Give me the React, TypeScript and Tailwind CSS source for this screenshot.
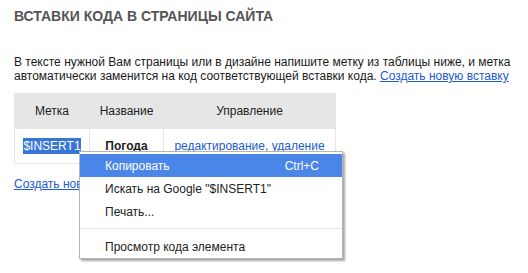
import React from "react";

export default function App() {
  return (
    <div className="w-[528px] h-[273px] bg-white relative overflow-hidden" style={{ fontFamily: '"Liberation Sans", Arial, sans-serif' }}>
      <div className="pl-[14px] pt-[7px]">
        <h1 className="text-[14px] leading-[18px] font-bold text-[#555555] whitespace-nowrap">ВСТАВКИ КОДА В СТРАНИЦЫ САЙТА</h1>
        <p className="mt-[30px] text-[12px] leading-[14px] text-[#1a1a1a] whitespace-nowrap">
          В тексте нужной Вам страницы или в дизайне напишите метку из таблицы ниже, и метка
          <br />
          автоматически заменится на код соответствующей вставки кода.{" "}
          <span className="text-[#1e5ad0] underline">Создать новую вставку</span>
        </p>
        <table className="mt-[10px] border-collapse text-[12px] text-[#222222]">
          <thead>
            <tr className="bg-[#e6e6e6] h-[35px]">
              <th className="font-normal w-[75px] border border-[#e6e6e6] p-0">Метка</th>
              <th className="font-normal w-[74px] border border-[#e6e6e6] p-0">Название</th>
              <th className="font-normal w-[172px] border border-[#e6e6e6] p-0">Управление</th>
            </tr>
          </thead>
          <tbody>
            <tr className="h-[35px]">
              <td className="border border-[#e6e6e6] text-center p-0">
                <span className="bg-[#3875d7] text-white py-[1px]">$INSERT1</span>
              </td>
              <td className="border border-[#e6e6e6] text-center font-bold p-0">Погода</td>
              <td className="border border-[#e6e6e6] text-center p-0 whitespace-nowrap">
                <span className="text-[#1e5ad0] underline">редактирование</span><span className="text-[#1e5ad0]">, </span><span className="text-[#1e5ad0] underline">удаление</span>
              </td>
            </tr>
          </tbody>
        </table>
        <div className="mt-[13px] text-[12px] leading-[14px]">
          <span className="text-[#1e5ad0] underline">Создать новую вставку</span>
        </div>
      </div>

      <div className="absolute left-[79px] top-[151px] w-[264px] bg-white border border-[#b5b5b5] pt-[2px] shadow-[2px_2px_2px_rgba(0,0,0,0.35)] text-[12px] text-[#222222]">
        <div className="h-[23px] bg-[#4a86e8] text-white flex items-center justify-between pl-[25px] pr-[23px]">
          <span>Копировать</span>
          <span>Ctrl+C</span>
        </div>
        <div className="h-[23px] flex items-center pl-[25px]">Искать на Google "$INSERT1"</div>
        <div className="h-[23px] flex items-center pl-[25px]">Печать...</div>
        <div className="mt-[5px] mb-[6px] h-px bg-[#e3e3e3]" />
        <div className="h-[23px] flex items-center pl-[25px]">Просмотр кода элемента</div>
      </div>
    </div>
  );
}
